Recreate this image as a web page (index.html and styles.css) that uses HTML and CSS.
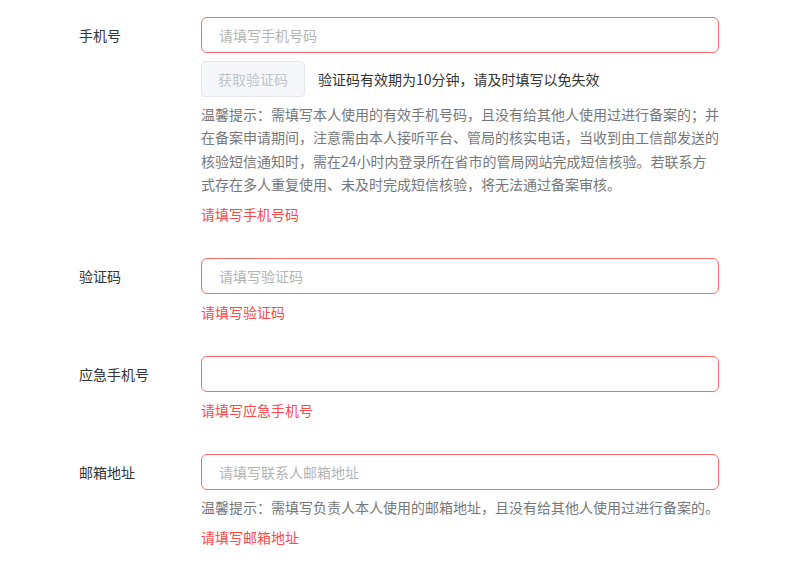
FILE: index.html
```html
<!DOCTYPE html>
<html lang="zh-CN">
<head>
<meta charset="utf-8">
<title>表单</title>
<link rel="stylesheet" href="styles.css">
</head>
<body>
<form class="form">
  <div class="item">
    <label class="label">手机号</label>
    <div class="content">
      <input class="input" type="text" placeholder="请填写手机号码">
      <div class="code-row">
        <button type="button" class="btn" disabled>获取验证码</button>
        <span class="code-tip">验证码有效期为10分钟，请及时填写以免失效</span>
      </div>
      <p class="hint">温馨提示：需填写本人使用的有效手机号码，且没有给其他人使用过进行备案的；并在备案申请期间，注意需由本人接听平台、管局的核实电话，当收到由工信部发送的核验短信通知时，需在24小时内登录所在省市的管局网站完成短信核验。若联系方式存在多人重复使用、未及时完成短信核验，将无法通过备案审核。</p>
      <div class="error">请填写手机号码</div>
    </div>
  </div>
  <div class="item">
    <label class="label">验证码</label>
    <div class="content">
      <input class="input" type="text" placeholder="请填写验证码">
      <div class="error">请填写验证码</div>
    </div>
  </div>
  <div class="item">
    <label class="label">应急手机号</label>
    <div class="content">
      <input class="input" type="text">
      <div class="error">请填写应急手机号</div>
    </div>
  </div>
  <div class="item">
    <label class="label">邮箱地址</label>
    <div class="content">
      <input class="input" type="text" placeholder="请填写联系人邮箱地址">
      <p class="hint">温馨提示：需填写负责人本人使用的邮箱地址，且没有给其他人使用过进行备案的。</p>
      <div class="error">请填写邮箱地址</div>
    </div>
  </div>
</form>
</body>
</html>
```
FILE: styles.css
```css
* { box-sizing: border-box; }
html, body {
  margin: 0;
  padding: 0;
  background: #fff;
}
body {
  font-family: "Noto Sans CJK SC", "Noto Sans", sans-serif;
  font-size: 14px;
  color: #333;
}
.form {
  padding: 17px 0 0 79px;
  width: 719px;
}
.item {
  display: flex;
  align-items: flex-start;
  margin-bottom: 34px;
}
.label {
  width: 122px;
  flex: none;
  line-height: 36px;
  height: 36px;
  color: #333;
}
.content {
  flex: 1;
  display: flex;
  flex-direction: column;
}
.input {
  width: 518px;
  height: 36px;
  border: 1px solid #f56c6c;
  border-radius: 6px;
  padding: 0 17px;
  font: inherit;
  font-size: 14px;
  color: #333;
  outline: none;
  background: #fff;
}
.input::placeholder {
  color: #b4b4b4;
}
.code-row {
  display: flex;
  align-items: center;
  margin-top: 8px;
}
.btn {
  width: 104px;
  height: 36px;
  background: #f5f7fa;
  border: 1px solid #e4e7ed;
  border-radius: 4px;
  color: #c0c4cc;
  font: inherit;
  font-size: 14px;
  padding: 0;
}
.code-tip {
  margin-left: 13px;
  color: #333;
}
.hint {
  margin: 6px 0 0;
  line-height: 23.3px;
  color: #777;
  width: 518px;
}
.error {
  margin-top: 8px;
  line-height: 20px;
  color: #fa4b4b;
}
```
